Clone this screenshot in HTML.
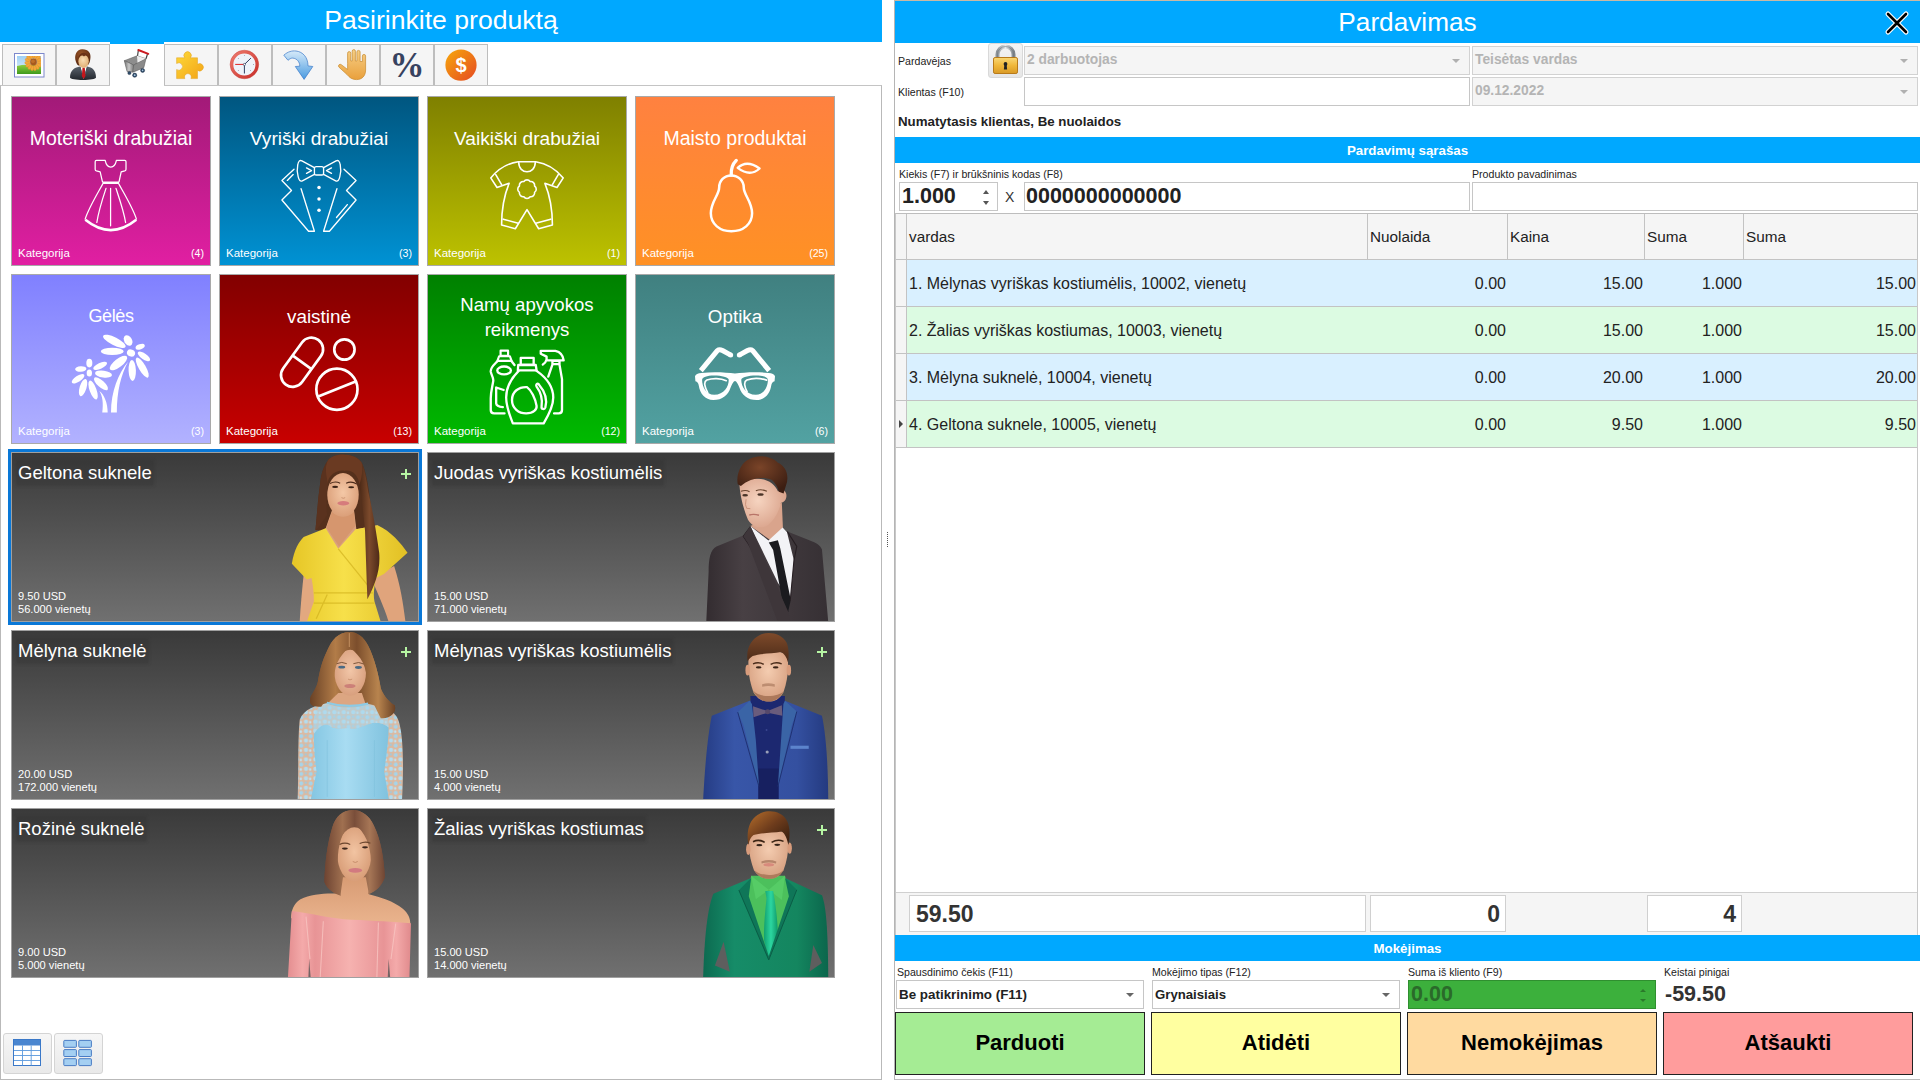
<!DOCTYPE html>
<html lang="lt">
<head>
<meta charset="utf-8">
<title>Pardavimas</title>
<style>
*{box-sizing:border-box;margin:0;padding:0}
html,body{width:1920px;height:1080px;overflow:hidden;background:#fff}
body{position:relative;font-family:"Liberation Sans",sans-serif;color:#222}
.abs{position:absolute}
/* ---------- left panel ---------- */
#lp{position:absolute;left:0;top:0;width:882px;height:1080px;background:#fff}
#lp .title{position:absolute;left:0;top:0;width:882px;height:42px;background:#00a8ff;color:#fff;font-size:26.6px;line-height:42px;text-align:center}
#lp .title span{position:relative;top:-1px}
.tab{position:absolute;top:44px;height:41px;width:54px;background:#f5f5f5;border:1px solid #bdbdbd;border-bottom:none}
.tab.act{top:42px;height:44px;background:#fff;border:none;border-top:2px solid #00a8ff;width:54px;z-index:2}
.tab svg{position:absolute;left:0;top:0}
#pane{position:absolute;left:0;top:85px;width:882px;height:995px;border:1px solid #b9b9b9;border-top:1px solid #c4c4c4}
.cat{position:absolute;width:200px;height:170px;border:1px solid #a9a9a9;color:#fff}
.cat .t{position:absolute;left:0;width:100%;text-align:center;font-size:19.5px;line-height:25px}
.cat .k{position:absolute;left:6px;bottom:5px;font-size:11.5px;line-height:13px}
.cat .n{position:absolute;right:6px;bottom:5px;font-size:10.6px;line-height:13px}
.cat svg{position:absolute}
.prod{position:absolute;width:408px;height:170px;border:1px solid #a0a0a0;color:#fff;background:linear-gradient(#3a3a3a,#707070);overflow:hidden}
.prod .t{position:absolute;left:5px;top:8px;font-size:18.5px;line-height:24px;padding:0 1px;background:rgba(48,48,48,.3);box-shadow:0 0 3px 1px rgba(48,48,48,.3)}
.prod .p{position:absolute;left:6px;top:137px;font-size:11.1px;line-height:13px}
.prod .plus{position:absolute;left:389px;top:16px;width:11px;height:11px}
.prod .plus:before{content:"";position:absolute;left:0;top:4px;width:10px;height:2px;background:#b6f5a3}
.prod .plus:after{content:"";position:absolute;left:4px;top:0;width:2px;height:10px;background:#b6f5a3}
.prod svg{position:absolute;top:-1px}
.vbtn{position:absolute;top:1033px;width:49px;height:41px;border:1px solid #d4d4d4;border-radius:3px;background:linear-gradient(#f6f6f6,#e9e9e9)}
/* ---------- right panel ---------- */
#rp{position:absolute;left:894px;top:0;width:1026px;height:1080px;border-left:1px solid #b5b5b5;border-top:1px solid #c9b9a5;border-bottom:1px solid #bcbcbc;background:#fff}
#rp .title{position:absolute;left:0;top:0;width:1025px;height:42px;background:#00a8ff;color:#fff;font-size:26.2px;line-height:42px;text-align:center}
.lbl{position:absolute;font-size:10.6px;line-height:13px;color:#222;white-space:nowrap}
.inp{position:absolute;height:29px;border:1px solid #c6c6c6;background:#fff;white-space:nowrap}
.inp.dis{background:#f5f5f5;border-color:#d2d2d2;color:#b4b4b4;font-weight:bold;font-size:13.8px;line-height:25px;padding-left:2px}
.arr{position:absolute;right:9px;top:12px;width:0;height:0;border-left:4px solid transparent;border-right:4px solid transparent;border-top:4px solid #666}
.dis .arr{border-top-color:#b0b0b0}
.bar{position:absolute;left:0;width:1025px;height:26px;background:#00a8ff;color:#fff;font-weight:bold;font-size:13.3px;line-height:28px;text-align:center}
.big{font-weight:bold;font-size:21.5px;color:#222}
#grid{position:absolute;left:0;top:212px;width:1023px;height:722px;border:1px solid #c8c8c8;border-top:1px solid #bdbdbd;border-bottom:none;background:#fff}
.hc{position:absolute;top:0;height:46px;background:#f5f5f5;border-right:1px solid #c3c3c3;border-bottom:1px solid #c3c3c3;font-size:15.3px;line-height:45px;padding-left:2px;color:#222}
.row{position:absolute;left:0;width:1021px;height:47px;border-bottom:1px solid #c3c3c3;font-size:16px;line-height:46px;color:#222}
.row .ind{position:absolute;left:0;top:0;width:11px;height:46px;background:#f5f5f5;border-right:1px solid #c3c3c3}
.row span{position:absolute;top:1px;white-space:nowrap}
.row .r{text-align:right}
.blue{background:#d9f0ff}.green{background:#dcfbe2}
#foot{position:absolute;left:0;top:678px;width:1021px;height:43px;background:#f5f5f5;border-top:1px solid #d0d0d0}
.fb{position:absolute;top:2px;height:37px;border:1px solid #d0d0d0;background:#fff;font-weight:bold;font-size:23px;line-height:37px;color:#333}
.btn{position:absolute;top:1011px;width:250px;height:63px;border:1px solid #222;font-weight:bold;font-size:22px;line-height:60px;text-align:center;color:#000}
</style>
</head>
<body>
<!--LEFT-->
<div id="lp">
<div class="title"><span>Pasirinkite produktą</span></div>
<div class="tab" style="left:2px"><svg width="52" height="40" viewBox="3 45 52 40"><defs><linearGradient id="sky" x1="0" y1="0" x2="0" y2="1"><stop offset="0" stop-color="#9fd0f4"/><stop offset="1" stop-color="#e8f4fc"/></linearGradient>
<linearGradient id="grs" x1="0" y1="0" x2="0" y2="1"><stop offset="0" stop-color="#8fcf3f"/><stop offset="1" stop-color="#3f9a1d"/></linearGradient></defs>
<rect x="14.5" y="53.5" width="29.5" height="23.5" fill="#fff" stroke="#7c88cc"/>
<rect x="17" y="56" width="24" height="18" fill="url(#sky)"/><path d="M17 66Q26 63.500 41 66V74H17Z" fill="url(#grs)"/>
<clipPath id="imc"><rect x="17" y="56" width="24" height="18"/></clipPath><g fill="#f3a83a" stroke="#e08a28" stroke-width=".4" clip-path="url(#imc)"><ellipse cx="33.5" cy="55.8" rx="1.5" ry="2.6" transform="rotate(0 33.5 62)"/><ellipse cx="33.5" cy="55.8" rx="1.5" ry="2.6" transform="rotate(24 33.5 62)"/><ellipse cx="33.5" cy="55.8" rx="1.5" ry="2.6" transform="rotate(48 33.5 62)"/><ellipse cx="33.5" cy="55.8" rx="1.5" ry="2.6" transform="rotate(72 33.5 62)"/><ellipse cx="33.5" cy="55.8" rx="1.5" ry="2.6" transform="rotate(96 33.5 62)"/><ellipse cx="33.5" cy="55.8" rx="1.5" ry="2.6" transform="rotate(120 33.5 62)"/><ellipse cx="33.5" cy="55.8" rx="1.5" ry="2.6" transform="rotate(144 33.5 62)"/><ellipse cx="33.5" cy="55.8" rx="1.5" ry="2.6" transform="rotate(168 33.5 62)"/><ellipse cx="33.5" cy="55.8" rx="1.5" ry="2.6" transform="rotate(192 33.5 62)"/><ellipse cx="33.5" cy="55.8" rx="1.5" ry="2.6" transform="rotate(216 33.5 62)"/><ellipse cx="33.5" cy="55.8" rx="1.5" ry="2.6" transform="rotate(240 33.5 62)"/><ellipse cx="33.5" cy="55.8" rx="1.5" ry="2.6" transform="rotate(264 33.5 62)"/><ellipse cx="33.5" cy="55.8" rx="1.5" ry="2.6" transform="rotate(288 33.5 62)"/><ellipse cx="33.5" cy="55.8" rx="1.5" ry="2.6" transform="rotate(312 33.5 62)"/><ellipse cx="33.5" cy="55.8" rx="1.5" ry="2.6" transform="rotate(336 33.5 62)"/></g><circle cx="33.500" cy="62" r="3.400" fill="#a85a1e"/><circle cx="33" cy="61.300" r="1.800" fill="#c0702a"/></svg></div>
<div class="tab" style="left:56px"><svg width="52" height="40" viewBox="57 45 52 40"><defs><radialGradient id="fc" cx=".45" cy=".4" r=".7"><stop offset="0" stop-color="#f9ddb4"/><stop offset="1" stop-color="#dca76a"/></radialGradient>
<linearGradient id="st" x1="0" y1="0" x2="0" y2="1"><stop offset="0" stop-color="#5a626c"/><stop offset="1" stop-color="#23272d"/></linearGradient>
<radialGradient id="hr" cx=".4" cy=".3" r=".8"><stop offset="0" stop-color="#9a5426"/><stop offset="1" stop-color="#4e230e"/></radialGradient></defs>
<path d="M70 77.500C70 70 75 67.300 80 66.500L83.500 68L87.200 66.500C92 67.300 96 70 96 77.500C96 80.800 70 80.800 70 77.500Z" fill="url(#st)"/>
<path d="M80.300 66.400L83.600 79L87 66.400L83.600 65Z" fill="#fff"/><path d="M82.500 67.800H84.800L85.500 76L83.600 79L81.800 76Z" fill="#c4161c"/>
<path d="M80.300 66.400L79 70L82.500 74ZM87 66.400L88.300 70L84.800 74Z" fill="#4a525c"/>
<path d="M76 62C73.500 55 77 49.500 82 49.300C88 49 91.500 53 90.300 59C90 62 89 64 88 65L78.500 65.500C77.500 65 76.500 63.500 76 62Z" fill="url(#hr)"/>
<ellipse cx="83.600" cy="61.200" rx="5.200" ry="6.700" fill="url(#fc)"/><path d="M78.300 60C79 56 82 54.500 84 56.500C86 54.500 88.500 56 88.900 59.500C89 56 87 52.500 83.500 52.700C79.500 53 78 56.500 78.300 60Z" fill="#6b3216"/></svg></div>
<div class="tab act" style="left:110px"><svg width="55" height="42" viewBox="110 44 55 42"><defs><linearGradient id="ct" x1="0" y1="0" x2="1" y2="0"><stop offset="0" stop-color="#6e6e6e"/><stop offset=".5" stop-color="#c8c8c8"/><stop offset="1" stop-color="#777"/></linearGradient></defs>
<path d="M138.300 50.500L137.500 56M147.500 54L146 58.800" stroke="#444" stroke-width="1.200" fill="none"/>
<path d="M138.300 50L148.300 53.800" stroke="#cc1a20" stroke-width="1.900" stroke-linecap="round"/>
<path d="M124.300 60.700L137 55.800L146 58.700L133.700 65Z" fill="#8d8d8d" stroke="#555" stroke-width=".5"/>
<path d="M137 55.800L146 58.700L143.800 67.500L137.600 64Z" fill="#eee"/>
<path d="M124.300 60.700L133.700 65L133 72.200L127 71.500Z" fill="url(#ct)" stroke="#555" stroke-width=".5"/>
<path d="M133.700 65L146 58.700L143.800 67.700L133 72.200Z" fill="#8a8a8a" stroke="#555" stroke-width=".5"/>
<g fill="#2f4d6b" stroke="#1e2f44" stroke-width=".5"><circle cx="129.400" cy="73" r="1.600"/><circle cx="134.700" cy="75.200" r="2.100"/><circle cx="142.600" cy="70.400" r="2"/></g>
<g fill="#a8c4dc"><circle cx="134.700" cy="75.200" r=".9"/><circle cx="142.600" cy="70.400" r=".8"/></g></svg></div>
<div class="tab" style="left:164px"><svg width="52" height="40" viewBox="165 45 52 40"><defs><linearGradient id="pz" x1="0" y1="0" x2="1" y2="1"><stop offset="0" stop-color="#fdd93a"/><stop offset="1" stop-color="#f3a316"/></linearGradient></defs>
<path d="M176.600 57.800H184.800A3.700 3.700 0 1 1 190.400 57.800H197.500V64.300A3.700 3.700 0 1 1 197.500 70.300V78.600H190.900A3.400 3.400 0 1 0 184.900 78.600H176.600V69.500A3.700 3.700 0 1 0 176.600 63.500Z" fill="url(#pz)" stroke="#e0a020" stroke-width=".5"/></svg></div>
<div class="tab" style="left:218px"><svg width="52" height="40" viewBox="219 45 52 40"><defs><linearGradient id="ck" x1="0" y1="0" x2="1" y2="1"><stop offset="0" stop-color="#ee7a6e"/><stop offset="1" stop-color="#c8302a"/></linearGradient></defs>
<circle cx="244.400" cy="64.500" r="12.700" fill="#eef3fa" stroke="url(#ck)" stroke-width="3.200"/>
<circle cx="244.400" cy="64.500" r="14.300" fill="none" stroke="#c23a34" stroke-width=".4"/>
<path d="M244.400 64.500L250.900 58.100M244.400 64.500V73.500" stroke="#2e3e60" stroke-width="1" fill="none"/><path d="M244.400 64.400H235.200" stroke="#d22" stroke-width="1"/>
<circle cx="244.400" cy="64.500" r="1.100" fill="#fff" stroke="#2e3e60" stroke-width=".6"/>
<g fill="#445"><circle cx="244.400" cy="55.300" r=".4"/><circle cx="253.500" cy="64.500" r=".4"/><circle cx="238.300" cy="58.400" r=".4"/><circle cx="238.300" cy="70.400" r=".4"/><circle cx="250.500" cy="70.400" r=".4"/></g></svg></div>
<div class="tab" style="left:272px"><svg width="52" height="40" viewBox="273 45 52 40"><defs><linearGradient id="ar" x1="0" y1="0" x2="0" y2="1"><stop offset="0" stop-color="#d6eaf9"/><stop offset="1" stop-color="#4a9be0"/></linearGradient></defs>
<path d="M283.800 55.200C288 51.500 292 50.600 296 51C303 51.800 308 57.500 308 65.900L312.800 66.500L304.100 79.400L295.300 66.500L299.800 66.200C299.800 62 297 58.500 292.800 58.100C291 58 289.500 59 288 60.300Z" fill="url(#ar)" stroke="#3a78c8" stroke-width=".7" stroke-linejoin="round"/></svg></div>
<div class="tab" style="left:326px"><svg width="52" height="40" viewBox="327 45 52 40"><defs><linearGradient id="hd" x1="0" y1="0" x2="0" y2="1"><stop offset="0" stop-color="#f6cf86"/><stop offset="1" stop-color="#e9a03c"/></linearGradient></defs>
<path d="M347.600 63.500V53.200A1.600 1.600 0 0 1 350.800 53.200V61H352.200V51.200A1.600 1.600 0 0 1 355.400 51.200V61H356.900V52A1.600 1.600 0 0 1 360.100 52V61.500H362.400V56A1.600 1.600 0 0 1 365.600 56V70C365.600 76 362 79.600 356.500 79.600C352 79.600 349.500 77.500 347 74.500L339 67.200A1.700 1.700 0 0 1 341.300 64.700L347.600 69.500Z" fill="url(#hd)" stroke="#c98b2e" stroke-width=".7" stroke-linejoin="round"/></svg></div>
<div class="tab" style="left:380px"><svg width="52" height="40" viewBox="381 45 52 40"><text x="407" y="77" text-anchor="middle" font-family="Liberation Serif, serif" font-weight="bold" font-size="35" fill="#37425f">%</text></svg></div>
<div class="tab" style="left:434px"><svg width="52" height="40" viewBox="435 45 52 40"><defs><linearGradient id="dl" x1="0" y1="0" x2="1" y2="1"><stop offset="0" stop-color="#f7a80c"/><stop offset="1" stop-color="#e54a22"/></linearGradient></defs>
<circle cx="461" cy="65.100" r="15.600" fill="url(#dl)"/><text x="461" y="72.300" text-anchor="middle" font-family="Liberation Sans, sans-serif" font-weight="bold" font-size="20" fill="#fff">$</text></svg></div>

<div id="pane"></div>
<div class="cat" style="left:11px;top:96px;background:linear-gradient(#a21a78,#e11fa2)"><div class="t" style="top:29px;font-size:19.5px">Moteriški drabužiai</div><svg style="left:49px;top:53px" width="100" height="90" viewBox="0 0 1200 1080" fill="none" stroke="#fff" stroke-linecap="round" stroke-linejoin="round"><g stroke-width="15"><path d="M425 125H530C540 175 570 205 597 205C625 205 655 175 665 125H765Q780 125 780 140V230Q780 245 765 250L722 262L697 380M425 125Q410 125 410 140V230Q410 245 425 250L470 262L497 380"/>
<path d="M500 410C440 520 330 700 290 830M695 410C755 520 865 700 905 830M595 460V910M540 460C500 580 450 740 430 870M660 460C700 580 755 740 775 870"/></g>
<rect x="497" y="378" width="200" height="30" fill="#fff" stroke="none"/><path d="M292 838Q597 1085 903 838" stroke-width="32" stroke-linecap="butt"/></svg><div class="k">Kategorija</div><div class="n">(4)</div></div>
<div class="cat" style="left:219px;top:96px;background:linear-gradient(#005680,#0092d4)"><div class="t" style="top:29px;font-size:19.1px">Vyriški drabužiai</div><svg style="left:49px;top:53px" width="100" height="90" viewBox="0 0 1200 1080" fill="none" stroke="#fff" stroke-linecap="round" stroke-linejoin="round"><g stroke-width="16"><rect x="545" y="200" width="110" height="100" rx="22"/>
<path d="M545 212L395 130Q355 112 345 180Q330 250 350 320Q365 388 400 370L545 292M655 212L805 130Q845 112 855 180Q870 250 850 320Q835 388 800 370L655 292"/>
<path d="M450 215L510 247L450 280M750 215L690 247L750 280"/>
<path d="M300 230L155 365L270 485L155 600L475 975H545L385 465M900 230L1045 365L930 485L1045 600L725 975H655L815 465"/>
<path d="M290 295L220 365M940 655L810 810"/></g>
<g fill="#fff" stroke="none"><circle cx="600" cy="450" r="21"/><circle cx="600" cy="588" r="21"/><circle cx="600" cy="722" r="21"/></g></svg><div class="k">Kategorija</div><div class="n">(3)</div></div>
<div class="cat" style="left:427px;top:96px;background:linear-gradient(#7f8000,#bdc200)"><div class="t" style="top:29px;font-size:19.1px">Vaikiški drabužiai</div><svg style="left:49px;top:53px" width="100" height="90" viewBox="0 0 1200 1080" fill="none" stroke="#fff" stroke-linecap="round" stroke-linejoin="round"><g stroke-width="19"><path d="M165 335Q300 170 495 140H705Q900 170 1035 335L960 450L815 400C880 560 905 720 905 900L740 945L600 715L460 945L295 900C295 720 320 560 385 400L240 450Z"/>
<path d="M500 145C500 300 700 300 700 145"/><path d="M225 295L295 415M975 295L905 415M315 830L495 880M885 830L705 880"/>
<path d="M638 379A46 46 0 0 1 691 432A46 46 0 0 1 691 508A46 46 0 0 1 638 561A46 46 0 0 1 562 561A46 46 0 0 1 509 508A46 46 0 0 1 509 432A46 46 0 0 1 562 379A46 46 0 0 1 638 379Z"/></g></svg><div class="k">Kategorija</div><div class="n">(1)</div></div>
<div class="cat" style="left:635px;top:96px;background:linear-gradient(#ff8140,#ff9124)"><div class="t" style="top:29px;font-size:19.5px">Maisto produktai</div><svg style="left:49px;top:53px" width="100" height="90" viewBox="0 0 1200 1080" fill="none" stroke="#fff" stroke-linecap="round" stroke-linejoin="round"><path d="M555 305C470 305 410 370 410 450C410 540 310 620 310 760C310 890 420 975 555 975C700 975 805 890 805 760C805 620 705 540 705 450C705 370 640 305 555 305Z" stroke-width="30"/>
<path d="M555 300C550 220 580 160 615 125" stroke-width="40"/><path d="M632 215Q740 112 895 222Q780 328 632 215Z" stroke-width="28"/></svg><div class="k">Kategorija</div><div class="n">(25)</div></div>
<div class="cat" style="left:11px;top:274px;background:linear-gradient(#8080ff,#b2b2ff)"><div class="t" style="top:29px;font-size:18px;letter-spacing:-.4px">Gėlės</div><svg style="left:49px;top:53px" width="100" height="90" viewBox="0 0 1200 1080" fill="none" stroke="#fff" stroke-linecap="round" stroke-linejoin="round"><g fill="#fff" stroke="none"><ellipse cx="840" cy="300" rx="50.0" ry="42.0" transform="rotate(20 840 300)"/><ellipse cx="640" cy="160" rx="150.0" ry="47.5" transform="rotate(27 640 160)"/><ellipse cx="805" cy="150" rx="67.5" ry="47.5" transform="rotate(62 805 150)"/><ellipse cx="950" cy="225" rx="57.5" ry="31.0" transform="rotate(-20 950 225)"/><ellipse cx="615" cy="280" rx="137.5" ry="44.0" transform="rotate(0 615 280)"/><ellipse cx="995" cy="340" rx="87.5" ry="36.0" transform="rotate(35 995 340)"/><ellipse cx="690" cy="420" rx="127.5" ry="49.0" transform="rotate(-38 690 420)"/><ellipse cx="855" cy="510" rx="125.0" ry="44.0" transform="rotate(88 855 510)"/><ellipse cx="975" cy="475" rx="137.5" ry="42.5" transform="rotate(60 975 475)"/><ellipse cx="340" cy="540" rx="32.0" ry="42.0" transform="rotate(0 340 540)"/><ellipse cx="340" cy="420" rx="52.5" ry="36.0" transform="rotate(90 340 420)"/><ellipse cx="470" cy="455" rx="90.0" ry="35.0" transform="rotate(-25 470 455)"/><ellipse cx="510" cy="553" rx="102.5" ry="41.0" transform="rotate(8 510 553)"/><ellipse cx="237" cy="492" rx="67.5" ry="33.0" transform="rotate(-3 237 492)"/><ellipse cx="205" cy="610" rx="87.5" ry="36.0" transform="rotate(-33 205 610)"/><ellipse cx="265" cy="715" rx="107.5" ry="41.0" transform="rotate(-73 265 715)"/><ellipse cx="385" cy="745" rx="120.0" ry="41.0" transform="rotate(70 385 745)"/><ellipse cx="480" cy="670" rx="107.5" ry="41.0" transform="rotate(42 480 670)"/><path d="M805 405C720 560 670 760 670 1015H600C600 760 690 540 805 405Z"/><path d="M460 755C520 800 560 900 560 1015H495C510 900 500 820 460 755Z"/></g></svg><div class="k">Kategorija</div><div class="n">(3)</div></div>
<div class="cat" style="left:219px;top:274px;background:linear-gradient(#820000,#c80000)"><div class="t" style="top:29px;font-size:18.9px">vaistinė</div><svg style="left:49px;top:53px" width="100" height="90" viewBox="0 0 1200 1080" fill="none" stroke="#fff" stroke-linecap="round" stroke-linejoin="round"><g stroke-width="32"><rect x="65" y="270" width="663" height="280" rx="140" transform="rotate(-54 397 410)"/><path d="M290 335L497 485"/>
<circle cx="905" cy="258" r="122"/><circle cx="815" cy="735" r="247"/><path d="M598 818L1032 645"/></g></svg><div class="k">Kategorija</div><div class="n">(13)</div></div>
<div class="cat" style="left:427px;top:274px;background:linear-gradient(#008000,#00ba00)"><div class="t" style="top:17px;font-size:18.6px">Namų apyvokos<br>reikmenys</div><svg style="left:49px;top:65px" width="100" height="90" viewBox="0 0 1200 1080" fill="none" stroke="#fff" stroke-linecap="round" stroke-linejoin="round"><g stroke-width="28"><path d="M283 128H373V190H283ZM265 195H395L415 250H245Z" stroke-width="26"/>
<path d="M245 255C200 300 160 330 165 380C170 420 200 450 195 490C185 560 165 620 165 700V840Q165 880 205 880H330M415 255L450 300"/>
<ellipse cx="325" cy="365" rx="82" ry="47"/><path d="M320 600L230 570V760Q235 800 310 805"/>
<path d="M525 215H680V295H525ZM495 300H705L715 365H490Z"/>
<path d="M500 370C420 450 350 560 350 690C350 800 390 900 430 1000H800C860 900 915 800 915 690C915 560 830 450 715 370"/>
<path d="M600 565C500 560 420 620 420 720C420 820 500 880 590 880C680 880 720 830 715 790C700 700 650 600 600 565Z"/>
<path d="M740 530C800 600 850 700 820 810C810 840 770 830 775 800C790 700 760 620 715 560C700 530 725 515 740 530Z"/>
<path d="M765 130H940Q1030 150 1040 245H835V200L765 165ZM830 245Q825 275 790 295M905 250H990V290H905ZM905 295L855 440M990 295L1020 470V840Q1020 880 980 880H925"/></g></svg><div class="k">Kategorija</div><div class="n">(12)</div></div>
<div class="cat" style="left:635px;top:274px;background:linear-gradient(#408080,#52a2a2)"><div class="t" style="top:29px;font-size:18.8px">Optika</div><svg style="left:49px;top:53px" width="100" height="90" viewBox="0 0 1200 1080" fill="none" stroke="#fff" stroke-linecap="round" stroke-linejoin="round"><g fill="#fff" stroke="none"><path fill-rule="evenodd" d="M120 580Q130 545 200 540C350 520 500 535 600 545C700 535 850 520 1000 540Q1070 545 1080 580L1075 640Q1040 650 1035 690C1020 790 960 860 860 865C750 865 680 800 655 720Q625 640 600 635Q575 640 545 720C520 800 450 865 340 865C240 860 180 790 165 690Q160 650 125 640Z
M205 620C210 590 260 570 350 570C440 570 520 590 525 620C525 700 470 800 350 800C250 800 205 700 205 620Z
M995 620C990 590 940 570 850 570C760 570 680 590 675 620C675 700 730 800 850 800C950 800 995 700 995 620Z"/></g>
<g stroke-width="20"><path d="M272 775C232 700 222 645 262 625C330 598 430 602 495 632M745 765C712 700 702 645 742 625C810 598 910 602 980 625"/></g>
<g stroke-width="60" stroke-linecap="butt"><path d="M190 512L388 272Q412 252 450 270L545 322M1010 512L812 272Q788 252 750 270L655 322"/></g><g fill="#fff" stroke="none"><circle cx="548" cy="325" r="30"/><circle cx="652" cy="325" r="30"/></g></svg><div class="k">Kategorija</div><div class="n">(6)</div></div>

<div class="abs" style="left:8px;top:449px;width:414px;height:176px;border:3px solid #0a78d7"></div>
<div class="prod" style="left:11px;top:452px"><!--PS0--><svg style="left:268px" width="140" height="170" viewBox="0 0 889 1080"><defs><linearGradient id="h0" x1="0" y1="0" x2="1" y2="0"><stop offset="0" stop-color="#4a2816"/><stop offset=".5" stop-color="#7c4a2c"/><stop offset="1" stop-color="#4e2a18"/></linearGradient>
<linearGradient id="y0" x1="0" y1="0" x2="1" y2="0"><stop offset="0" stop-color="#e6c626"/><stop offset=".45" stop-color="#f7e04a"/><stop offset="1" stop-color="#e2c024"/></linearGradient>
<radialGradient id="f0" cx=".5" cy=".45" r=".6"><stop offset="0" stop-color="#f4c8a6"/><stop offset="1" stop-color="#d99c76"/></radialGradient></defs><path d="M300 60C330 0 480 0 520 70C560 150 570 300 590 450L600 540L225 495C235 400 240 300 255 200C262 130 280 90 300 60Z" fill="#55301c"/>
<path d="M330 370H470L485 490L620 465V540L370 650L240 520L290 485Z" fill="#dba27c"/>
<path d="M150 780L225 805L208 1080H125C130 980 140 880 150 780Z" fill="#e2a880"/><path d="M600 790L725 725C765 850 782 960 797 1080H690C660 980 620 900 600 850Z" fill="#e0a47c"/>
<path d="M290 485L370 615L480 490L620 465C700 500 770 580 810 640L660 775L610 800C600 850 590 900 600 950L640 1080H170L215 950C215 900 210 850 200 800L170 810L75 710C90 620 120 570 150 540Z" fill="url(#y0)"/>
<path d="M370 615L560 850M215 895H590M215 960H600M300 905L230 1060" stroke="#d2b21e" stroke-width="8" fill="none" opacity=".7"/>
<path d="M330 380C360 420 440 420 470 380L478 470L375 600L295 480Z" fill="#d6966e"/>
<ellipse cx="400" cy="272" rx="100" ry="138" fill="url(#f0)"/>
<path d="M300 205C310 130 380 112 410 120C450 110 500 140 505 215C545 150 520 70 520 70C480 0 330 0 300 60C280 100 290 160 300 205Z" fill="#6a3a22"/>
<path d="M300 60C280 120 300 160 303 205C298 260 290 330 300 400L240 485L225 495C235 400 240 300 255 200C262 130 280 90 300 60Z" fill="#5a321e"/>
<path d="M503 210C520 300 530 400 540 500C545 650 550 800 555 935C600 850 640 750 630 640C610 500 590 380 560 250C550 180 540 120 520 70C527 130 515 180 503 210Z" fill="url(#h0)"/>
<ellipse cx="350" cy="222" rx="19" ry="7" fill="#3a2216"/><ellipse cx="452" cy="224" rx="19" ry="7" fill="#3a2216"/>
<path d="M318 200Q350 182 382 198M420 198Q455 182 488 204" stroke="#4a2a1a" stroke-width="7" fill="none"/>
<ellipse cx="402" cy="326" rx="38" ry="14" fill="#d67c7c"/><path d="M390 290Q402 298 414 290" stroke="#c48a68" stroke-width="5" fill="none"/></svg><!--PE0--><div class="t">Geltona suknele</div><div class="p">9.50 USD<br>56.000 vienetų</div><i class="plus"></i></div>
<div class="prod" style="left:427px;top:452px"><!--PS1--><svg style="left:268px" width="140" height="170" viewBox="0 0 889 1080"><defs><linearGradient id="s1" x1="0" y1="0" x2="1" y2="0"><stop offset="0" stop-color="#332c30"/><stop offset=".3" stop-color="#484044"/><stop offset="1" stop-color="#363034"/></linearGradient>
<radialGradient id="f1" cx=".4" cy=".45" r=".65"><stop offset="0" stop-color="#f6d4c0"/><stop offset="1" stop-color="#d8a088"/></radialGradient>
<radialGradient id="hh1" cx=".45" cy=".3" r=".7"><stop offset="0" stop-color="#7a4428"/><stop offset="1" stop-color="#3c1e12"/></radialGradient></defs><path d="M345 475L300 530L130 600C90 620 80 680 80 760L65 1080H840L800 620C790 590 760 575 720 560L580 505Z" fill="url(#s1)"/>
<path d="M440 430L545 320L552 480L480 565L345 470Z" fill="#d9a48c"/>
<path d="M345 470L460 562L550 480L578 510L622 690L598 950L520 830Z" fill="#f3f3f6"/>
<path d="M462 575L520 560L535 612L602 940L585 1015L545 930L490 622Z" fill="#1b1b1f"/>
<path d="M345 475L300 535L330 580L585 1015M580 505L640 600L622 690L598 950" stroke="#261e22" stroke-width="7" fill="none"/>
<path d="M345 470L585 1015L600 1080H520L330 580L300 535Z" fill="#3e363a"/>
<path d="M275 200C280 280 300 360 330 430C360 482 420 492 460 462C510 420 530 360 540 322C572 322 588 270 560 245L520 250C500 200 440 165 380 170C330 172 290 185 275 200Z" fill="url(#f1)"/>
<path d="M265 205C252 140 290 62 340 45C400 12 480 28 520 68C572 90 594 150 572 212L556 264L526 252C520 222 500 192 480 176C420 152 340 166 285 216Z" fill="url(#hh1)"/>
<ellipse cx="312" cy="275" rx="18" ry="8" fill="#4a3428"/><ellipse cx="410" cy="270" rx="20" ry="8" fill="#4a3428"/>
<path d="M285 250Q315 238 340 252M380 246Q415 232 450 250" stroke="#6a4630" stroke-width="7" fill="none"/>
<path d="M338 400Q368 392 400 402" stroke="#b87468" stroke-width="9" fill="none"/><path d="M318 300Q308 340 322 358L345 360" stroke="#c89078" stroke-width="6" fill="none"/></svg><!--PE1--><div class="t">Juodas vyriškas kostiumėlis</div><div class="p">15.00 USD<br>71.000 vienetų</div></div>
<div class="prod" style="left:11px;top:630px"><!--PS2--><svg style="left:268px" width="140" height="170" viewBox="0 0 889 1080"><defs><linearGradient id="h2" x1="0" y1="0" x2="1" y2="0"><stop offset="0" stop-color="#6a4226"/><stop offset=".3" stop-color="#b27c48"/><stop offset=".55" stop-color="#7c4e2c"/><stop offset=".8" stop-color="#b8844e"/><stop offset="1" stop-color="#6a4226"/></linearGradient>
<linearGradient id="b2" x1="0" y1="0" x2="1" y2="0"><stop offset="0" stop-color="#84c6e2"/><stop offset=".45" stop-color="#a8dcf2"/><stop offset="1" stop-color="#80c2de"/></linearGradient>
<radialGradient id="f2" cx=".5" cy=".45" r=".6"><stop offset="0" stop-color="#f2c6a8"/><stop offset="1" stop-color="#d69c7a"/></radialGradient>
<pattern id="lace" width="60" height="60" patternUnits="userSpaceOnUse"><rect width="60" height="60" fill="#dcb9a0"/><circle cx="15" cy="15" r="13" fill="#a6d4ea"/><circle cx="45" cy="42" r="14" fill="#b4dcee"/><circle cx="44" cy="10" r="7" fill="#9acce4"/><circle cx="12" cy="46" r="8" fill="#c2e2f0"/></pattern></defs><path d="M440 12C370 15 330 60 300 130C265 200 250 270 240 330C225 390 190 410 190 450C192 480 210 490 260 490L640 560C700 565 740 530 730 480C680 450 650 400 640 370C625 280 600 180 560 100C530 40 490 12 440 12Z" fill="url(#h2)"/>
<path d="M295 465C230 480 150 500 125 570C112 700 118 900 112 1080H775C785 900 785 700 760 600C745 520 690 495 560 470Z" fill="url(#lace)"/>
<path d="M370 400H520L545 475C480 500 380 500 300 468Z" fill="#dca682"/>
<path d="M215 660C240 620 270 600 300 600C350 640 400 620 440 622C500 640 560 590 600 590C640 590 670 600 690 620C690 700 675 800 662 900L692 1080H195L232 900C222 820 215 740 215 660Z" fill="url(#b2)"/>
<path d="M297 468C240 480 200 520 215 660C240 620 270 600 300 600C350 640 400 620 440 622C500 640 560 590 600 590C640 590 670 600 690 620C700 540 650 490 560 470Q430 505 297 468Z" fill="#a9d8ee" opacity=".55"/><path d="M300 700V1060M600 700V1060" stroke="#7fc0dc" stroke-width="6" opacity=".6"/>
<path d="M297 462Q430 500 560 468" stroke="#8ccbe6" stroke-width="14" fill="none"/>
<ellipse cx="446" cy="272" rx="100" ry="146" fill="url(#f2)"/>
<path d="M440 12C370 15 330 60 300 130C265 200 250 270 240 330C225 390 190 410 190 450C192 480 215 488 262 488C300 430 330 380 345 320C340 240 370 170 440 110C520 170 555 240 548 330C560 400 590 460 640 560C700 565 740 530 730 480C680 450 650 400 640 370C625 280 600 180 560 100C530 40 490 12 440 12Z" fill="url(#h2)"/>
<path d="M440 20V108" stroke="#c89464" stroke-width="6"/>
<ellipse cx="392" cy="236" rx="22" ry="9" fill="#4a6a84"/><ellipse cx="498" cy="238" rx="22" ry="9" fill="#4a6a84"/>
<path d="M360 214Q392 198 424 214M466 214Q500 198 532 216" stroke="#7a5236" stroke-width="6" fill="none"/>
<ellipse cx="444" cy="356" rx="36" ry="13" fill="#cc8078"/><path d="M432 312Q444 322 458 312" stroke="#c48c6a" stroke-width="5" fill="none"/></svg><!--PE2--><div class="t">Mėlyna suknelė</div><div class="p">20.00 USD<br>172.000 vienetų</div><i class="plus"></i></div>
<div class="prod" style="left:427px;top:630px"><!--PS3--><svg style="left:268px" width="140" height="170" viewBox="0 0 889 1080"><defs><linearGradient id="s3" x1="0" y1="0" x2="1" y2="0"><stop offset="0" stop-color="#253c84"/><stop offset=".25" stop-color="#3856a8"/><stop offset=".75" stop-color="#3450a0"/><stop offset="1" stop-color="#243a80"/></linearGradient>
<radialGradient id="f3" cx=".5" cy=".4" r=".65"><stop offset="0" stop-color="#f4ccb0"/><stop offset="1" stop-color="#d49c7c"/></radialGradient>
<linearGradient id="hh3" x1="0" y1="0" x2="0" y2="1"><stop offset="0" stop-color="#7e4a2a"/><stop offset="1" stop-color="#4a2a18"/></linearGradient></defs><path d="M160 950L180 1080H150ZM745 970L765 1080H735Z" fill="#d8d8d8"/>
<path d="M340 450L100 545C80 640 60 800 45 1080H840C838 800 820 640 800 545L565 450Z" fill="url(#s3)"/>
<path d="M345 420H565L560 560L522 990V1080H400V990L352 560Z" fill="#1c2870"/>
<path d="M395 880H525V1080H395Z" fill="#172060"/>
<path d="M340 450L265 522L300 600L400 995L380 700L355 470ZM565 450L640 518L610 600L520 995L540 700L555 470Z" fill="#3a64a6"/>
<path d="M265 522L400 995M640 518L520 995" stroke="#1e3070" stroke-width="6" fill="none"/>
<path d="M362 485L455 515L545 478L548 545L455 525L365 555Z" fill="#6a5c7c"/><circle cx="455" cy="520" r="16" fill="#55486a"/>
<circle cx="452" cy="775" r="10" fill="#9aa0b8"/><circle cx="448" cy="635" r="6" fill="#3a4690"/>
<path d="M600 745H716" stroke="#5c84cc" stroke-width="20"/>
<path d="M335 170C325 260 345 340 365 395C395 445 430 455 460 455C500 455 530 440 555 395C580 330 590 250 582 170C560 120 360 120 335 170Z" fill="url(#f3)"/>
<ellipse cx="328" cy="255" rx="14" ry="34" fill="#d89c7c"/><ellipse cx="590" cy="255" rx="14" ry="34" fill="#d89c7c"/>
<path d="M362 385C395 445 430 455 460 455C500 455 530 440 557 388C540 410 500 420 460 420C420 420 385 410 362 385Z" fill="#9c6a4c" opacity=".75"/>
<path d="M420 345Q460 332 500 345L500 360Q460 350 420 360Z" fill="#8c5a40" opacity=".45"/>
<path d="M328 200C315 120 350 60 400 35C450 5 540 15 575 80C592 120 590 170 584 205C575 170 560 150 540 140C480 150 400 150 360 165C345 175 335 185 328 200Z" fill="url(#hh3)"/>
<ellipse cx="398" cy="238" rx="18" ry="7" fill="#3a2418"/><ellipse cx="506" cy="238" rx="18" ry="7" fill="#3a2418"/>
<path d="M362 215Q398 200 430 218M474 218Q508 200 544 215" stroke="#4a2c1a" stroke-width="9" fill="none"/></svg><!--PE3--><div class="t">Mėlynas vyriškas kostiumėlis</div><div class="p">15.00 USD<br>4.000 vienetų</div><i class="plus"></i></div>
<div class="prod" style="left:11px;top:808px"><!--PS4--><svg style="left:268px" width="140" height="170" viewBox="0 0 889 1080"><defs><linearGradient id="h4" x1="0" y1="0" x2="1" y2="0"><stop offset="0" stop-color="#6e4432"/><stop offset=".3" stop-color="#a07050"/><stop offset=".5" stop-color="#7a4e3a"/><stop offset=".75" stop-color="#a67656"/><stop offset="1" stop-color="#704634"/></linearGradient>
<linearGradient id="p4" x1="0" y1="0" x2="1" y2="0"><stop offset="0" stop-color="#e48e90"/><stop offset=".12" stop-color="#f4aaaa"/><stop offset=".22" stop-color="#e89496"/><stop offset=".5" stop-color="#f6b2b0"/><stop offset=".78" stop-color="#e89496"/><stop offset=".88" stop-color="#f4aaaa"/><stop offset="1" stop-color="#e08a8c"/></linearGradient>
<radialGradient id="f4" cx=".5" cy=".45" r=".6"><stop offset="0" stop-color="#f2c4a2"/><stop offset="1" stop-color="#d69a74"/></radialGradient>
<linearGradient id="sk4" x1="0" y1="0" x2="0" y2="1"><stop offset="0" stop-color="#d89c74"/><stop offset="1" stop-color="#eab48e"/></linearGradient></defs><path d="M460 12C400 15 350 50 330 130C300 230 285 350 282 470C300 520 350 545 387 558L560 548C610 530 650 490 666 440C660 320 640 200 595 110C570 50 520 12 460 12Z" fill="url(#h4)"/>
<path d="M400 440H545L565 548C640 570 720 590 780 640C815 670 828 700 828 740L70 700C72 650 85 610 130 580C200 545 300 540 385 545Z" fill="url(#sk4)"/>
<path d="M75 655C200 670 330 705 450 710C600 715 720 725 832 732L822 1080H50Z" fill="url(#p4)"/>
<path d="M185 960L195 1080H180ZM690 960L700 1080H684Z" fill="#555" opacity=".8"/>
<path d="M275 720L255 1080M625 728L615 1080M165 690L190 960M735 735L705 960" stroke="#f8c4c0" stroke-width="7" fill="none" opacity=".8"/>
<ellipse cx="472" cy="295" rx="108" ry="172" fill="url(#f4)"/>
<path d="M460 12C400 15 350 50 330 130C300 230 285 350 282 470C300 520 350 545 387 558C370 480 360 400 368 300C375 200 410 130 455 85C520 130 565 200 575 300C582 400 575 480 560 548C610 530 650 490 666 440C660 320 640 200 595 110C570 50 520 12 460 12Z" fill="url(#h4)"/>
<ellipse cx="412" cy="258" rx="19" ry="7" fill="#3c261c"/><ellipse cx="540" cy="250" rx="19" ry="7" fill="#3c261c"/>
<path d="M378 232Q412 214 446 232M506 226Q542 208 574 224" stroke="#6a452e" stroke-width="7" fill="none"/>
<ellipse cx="478" cy="396" rx="44" ry="15" fill="#d27a80"/><path d="M462 340Q478 352 494 340" stroke="#c48a68" stroke-width="6" fill="none"/></svg><!--PE4--><div class="t">Rožinė suknelė</div><div class="p">9.00 USD<br>5.000 vienetų</div></div>
<div class="prod" style="left:427px;top:808px"><!--PS5--><svg style="left:268px" width="140" height="170" viewBox="0 0 889 1080"><defs><linearGradient id="s5" x1="0" y1="0" x2="1" y2="0"><stop offset="0" stop-color="#0c6a50"/><stop offset=".25" stop-color="#168c68"/><stop offset=".75" stop-color="#14865f"/><stop offset="1" stop-color="#0b664c"/></linearGradient>
<linearGradient id="t5" x1="0" y1="0" x2="1" y2="0"><stop offset="0" stop-color="#12a070"/><stop offset=".5" stop-color="#2cd6a0"/><stop offset="1" stop-color="#0e9868"/></linearGradient>
<radialGradient id="f5" cx=".5" cy=".4" r=".65"><stop offset="0" stop-color="#f4ccb0"/><stop offset="1" stop-color="#d49c7c"/></radialGradient>
<linearGradient id="hh5" x1="0" y1="0" x2="1" y2="1"><stop offset="0" stop-color="#b8702c"/><stop offset=".5" stop-color="#6e3c1c"/><stop offset="1" stop-color="#2e1a0e"/></linearGradient></defs><path d="M350 445L110 545C80 620 55 760 45 1080H840C838 760 825 620 800 555L565 445Z" fill="url(#s5)"/>
<path d="M175 850L120 1000L215 1040ZM745 870L800 985L720 1040Z" fill="#5e5e5e"/>
<path d="M350 430H565L600 560L462 965L330 560Z" fill="#4cc05c"/>
<path d="M350 430L462 520L380 580ZM565 430L462 520L545 585Z" fill="#56cc66"/>
<path d="M440 528H490L498 575C515 680 520 760 520 820L462 960L432 840C430 740 440 650 448 575Z" fill="url(#t5)"/>
<path d="M350 445L272 522L462 965L640 520L565 445L590 560L462 940L335 560Z" fill="#0f7658"/>
<path d="M272 522L462 965L640 520" stroke="#0a5a44" stroke-width="6" fill="none"/>
<path d="M340 180C328 270 348 340 368 395C398 440 430 450 462 450C500 450 530 438 556 395C580 330 592 260 584 180C560 125 365 125 340 180Z" fill="url(#f5)"/>
<ellipse cx="332" cy="262" rx="14" ry="36" fill="#d89c7c"/><ellipse cx="595" cy="255" rx="14" ry="36" fill="#d89c7c"/>
<path d="M366 390C398 440 430 450 462 450C500 450 530 438 558 390C540 415 500 425 462 425C420 425 385 412 366 390Z" fill="#9c6a4c" opacity=".7"/>
<path d="M415 340Q462 322 510 340L508 352Q462 340 417 352Z" fill="#7c4a34" opacity=".45"/><ellipse cx="462" cy="360" rx="34" ry="11" fill="#d88a7c"/>
<path d="M332 235C318 140 340 80 390 45C440 5 545 10 580 85C600 130 595 190 586 235C578 190 565 165 545 150C480 160 410 158 365 172C348 185 338 205 332 235Z" fill="url(#hh5)"/>
<ellipse cx="402" cy="236" rx="19" ry="7" fill="#34241a"/><ellipse cx="516" cy="234" rx="19" ry="7" fill="#34241a"/>
<path d="M362 214Q400 196 436 218M480 218Q518 196 556 212" stroke="#3c2414" stroke-width="10" fill="none"/></svg><!--PE5--><div class="t">Žalias vyriškas kostiumas</div><div class="p">15.00 USD<br>14.000 vienetų</div><i class="plus"></i></div>

<div class="vbtn" style="left:3px"><svg width="46" height="39" viewBox="4 1034 46 39" style="position:absolute;left:0;top:0"><rect x="13.500" y="1039.500" width="27" height="26" fill="#fff" stroke="#3a78c8"/><rect x="14" y="1040" width="26" height="5.500" fill="#4a86d0"/>
<path d="M22.500 1045.500V1065.500M31.200 1045.500V1065.500M14 1050.500H40M14 1055.500H40M14 1060.500H40" stroke="#5a98dc" stroke-width=".9"/></svg></div>
<div class="vbtn" style="left:54px"><svg width="46" height="39" viewBox="55 1034 46 39" style="position:absolute;left:0;top:0"><g fill="#a4cff2" stroke="#3a70c0" stroke-width=".9"><rect x="63.8" y="1040.4" width="12.600" height="6.900" rx=".8"/><rect x="63.8" y="1049.6" width="12.600" height="6.900" rx=".8"/><rect x="63.8" y="1058.7" width="12.600" height="6.900" rx=".8"/><rect x="78.8" y="1040.4" width="12.600" height="6.900" rx=".8"/><rect x="78.8" y="1049.6" width="12.600" height="6.900" rx=".8"/><rect x="78.8" y="1058.7" width="12.600" height="6.900" rx=".8"/></g></svg></div>

</div>
<div class="abs" style="left:887px;top:532px;width:1px;height:15px;background:repeating-linear-gradient(#555 0 1px,transparent 1px 2px)"></div>
<!--RIGHT-->
<div id="rp">
<div class="title"><span>Pardavimas</span></div>
<svg class="abs" style="left:988px;top:8px" width="28" height="28" viewBox="0 0 28 28"><path d="M5 5 L23 23 M23 5 L5 23" stroke="#fff" stroke-width="5" stroke-linecap="round"/><path d="M5 5 L23 23 M23 5 L5 23" stroke="#000" stroke-width="2.6" stroke-linecap="round"/></svg>

<div class="lbl" style="left:3px;top:54px">Pardavėjas</div>
<div class="abs" id="lock" style="left:93px;top:42px;width:35px;height:35px;border:1px solid #d9d9d9;border-radius:3px;background:linear-gradient(#f4f4f4,#e6e6e6)">
<svg width="33" height="33" viewBox="0 0 33 33" style="position:absolute;left:0;top:0">
<defs><linearGradient id="lg1" x1="0" y1="0" x2="0" y2="1"><stop offset="0" stop-color="#f9d876"/><stop offset=".5" stop-color="#f0b73a"/><stop offset="1" stop-color="#d99a26"/></linearGradient>
<linearGradient id="lg2" x1="0" y1="0" x2="1" y2="0"><stop offset="0" stop-color="#8c9399"/><stop offset=".5" stop-color="#e4e8ea"/><stop offset="1" stop-color="#7d848a"/></linearGradient></defs>
<path d="M8.5 17 V10.5 a8 8 0 0 1 16 0 V17" fill="none" stroke="url(#lg2)" stroke-width="4"/>
<path d="M8.5 17 V10.5 a8 8 0 0 1 16 0 V17" fill="none" stroke="#6f767c" stroke-width=".6" transform="translate(0,0)"/>
<rect x="4.5" y="13.5" width="24" height="16" rx="1.6" fill="url(#lg1)" stroke="#b87a1a" stroke-width="1"/>
<circle cx="16.5" cy="20" r="1.9" fill="#222"/><path d="M15.4 20.5 L14.9 25.5 H18.1 L17.6 20.5Z" fill="#222"/>
</svg></div>
<div class="inp dis" style="left:129px;top:45px;width:446px">2 darbuotojas<i class="arr"></i></div>
<div class="inp dis" style="left:577px;top:45px;width:446px">Teisėtas vardas<i class="arr"></i></div>
<div class="lbl" style="left:3px;top:85px">Klientas (F10)</div>
<div class="inp" style="left:129px;top:76px;width:446px"></div>
<div class="inp dis" style="left:577px;top:76px;width:446px">09.12.2022<i class="arr"></i></div>
<div class="abs" style="left:3px;top:113px;font-weight:bold;font-size:13.3px;line-height:16px;color:#222;white-space:nowrap">Numatytasis klientas, Be nuolaidos</div>
<div class="bar" style="top:136px">Pardavimų sąrašas</div>
<div class="lbl" style="left:4px;top:167px">Kiekis (F7) ir brūkšninis kodas (F8)</div>
<div class="lbl" style="left:577px;top:167px">Produkto pavadinimas</div>
<div class="inp big" style="left:4px;top:181px;width:99px;line-height:27px;padding-left:2px">1.000
<i class="abs" style="right:8px;top:7px;border-left:3px solid transparent;border-right:3px solid transparent;border-bottom:4px solid #555"></i>
<i class="abs" style="right:8px;top:18px;border-left:3px solid transparent;border-right:3px solid transparent;border-top:4px solid #555"></i></div>
<div class="abs" style="left:110px;top:187px;font-size:14px;line-height:18px;color:#333">X</div>
<div class="inp big" style="left:129px;top:181px;width:446px;line-height:27px;padding-left:1px">0000000000000</div>
<div class="inp" style="left:577px;top:181px;width:446px"></div>

<div id="grid">
<div class="hc" style="left:0px;width:11px"></div>
<div class="hc" style="left:11px;width:461px">vardas</div>
<div class="hc" style="left:472px;width:140px">Nuolaida</div>
<div class="hc" style="left:612px;width:137px">Kaina</div>
<div class="hc" style="left:749px;width:99px">Suma</div>
<div class="hc" style="left:848px;width:174px">Suma</div>
<div class="row blue" style="top:46px"><i class="ind"></i><span style="left:13px">1. Mėlynas vyriškas kostiumėlis, 10002, vienetų</span><span class="r" style="left:472px;width:138px">0.00</span><span class="r" style="left:612px;width:135px">15.00</span><span class="r" style="left:749px;width:97px">1.000</span><span class="r" style="left:848px;width:172px">15.00</span></div>
<div class="row green" style="top:93px"><i class="ind"></i><span style="left:13px">2. Žalias vyriškas kostiumas, 10003, vienetų</span><span class="r" style="left:472px;width:138px">0.00</span><span class="r" style="left:612px;width:135px">15.00</span><span class="r" style="left:749px;width:97px">1.000</span><span class="r" style="left:848px;width:172px">15.00</span></div>
<div class="row blue" style="top:140px"><i class="ind"></i><span style="left:13px">3. Mėlyna suknelė, 10004, vienetų</span><span class="r" style="left:472px;width:138px">0.00</span><span class="r" style="left:612px;width:135px">20.00</span><span class="r" style="left:749px;width:97px">1.000</span><span class="r" style="left:848px;width:172px">20.00</span></div>
<div class="row green" style="top:187px"><i class="ind"><i class="abs" style="left:3px;top:19px;border-top:4px solid transparent;border-bottom:4px solid transparent;border-left:4px solid #444"></i></i><span style="left:13px">4. Geltona suknele, 10005, vienetų</span><span class="r" style="left:472px;width:138px">0.00</span><span class="r" style="left:612px;width:135px">9.50</span><span class="r" style="left:749px;width:97px">1.000</span><span class="r" style="left:848px;width:172px">9.50</span></div>
<div id="foot">
<div class="fb" style="left:13px;width:457px;padding-left:6px">59.50</div>
<div class="fb" style="left:474px;width:136px;text-align:right;padding-right:5px">0</div>
<div class="fb" style="left:751px;width:95px;text-align:right;padding-right:5px">4</div>
</div>
</div>

<div class="bar" style="top:934px">Mokėjimas</div>
<div class="lbl" style="left:2px;top:965px">Spausdinimo čekis (F11)</div>
<div class="lbl" style="left:257px;top:965px">Mokėjimo tipas (F12)</div>
<div class="lbl" style="left:513px;top:965px">Suma iš kliento (F9)</div>
<div class="lbl" style="left:769px;top:965px">Keistai pinigai</div>
<div class="inp" style="left:1px;top:979px;width:248px;font-weight:bold;font-size:13.4px;line-height:27px;padding-left:2px;color:#222">Be patikrinimo (F11)<i class="arr"></i></div>
<div class="inp" style="left:257px;top:979px;width:248px;font-weight:bold;font-size:13.2px;line-height:27px;padding-left:2px;color:#222">Grynaisiais<i class="arr"></i></div>
<div class="inp big" style="left:513px;top:979px;width:248px;background:#3cb03c;border-color:#2f8f2f;color:#2a6a2a;line-height:27px;padding-left:2px">0.00
<i class="abs" style="right:9px;top:8px;border-left:3px solid transparent;border-right:3px solid transparent;border-bottom:3px solid #2a7a2a"></i>
<i class="abs" style="right:9px;top:18px;border-left:3px solid transparent;border-right:3px solid transparent;border-top:3px solid #2a7a2a"></i></div>
<div class="abs big" style="left:770px;top:980px;line-height:26px;color:#333">-59.50</div>
<div class="btn" style="left:0;background:#a5ec94">Parduoti</div>
<div class="btn" style="left:256px;background:#ffffa0">Atidėti</div>
<div class="btn" style="left:512px;background:#ffdaa0">Nemokėjimas</div>
<div class="btn" style="left:768px;background:#ff9c9c">Atšaukti</div>

</div>
</body>
</html>
